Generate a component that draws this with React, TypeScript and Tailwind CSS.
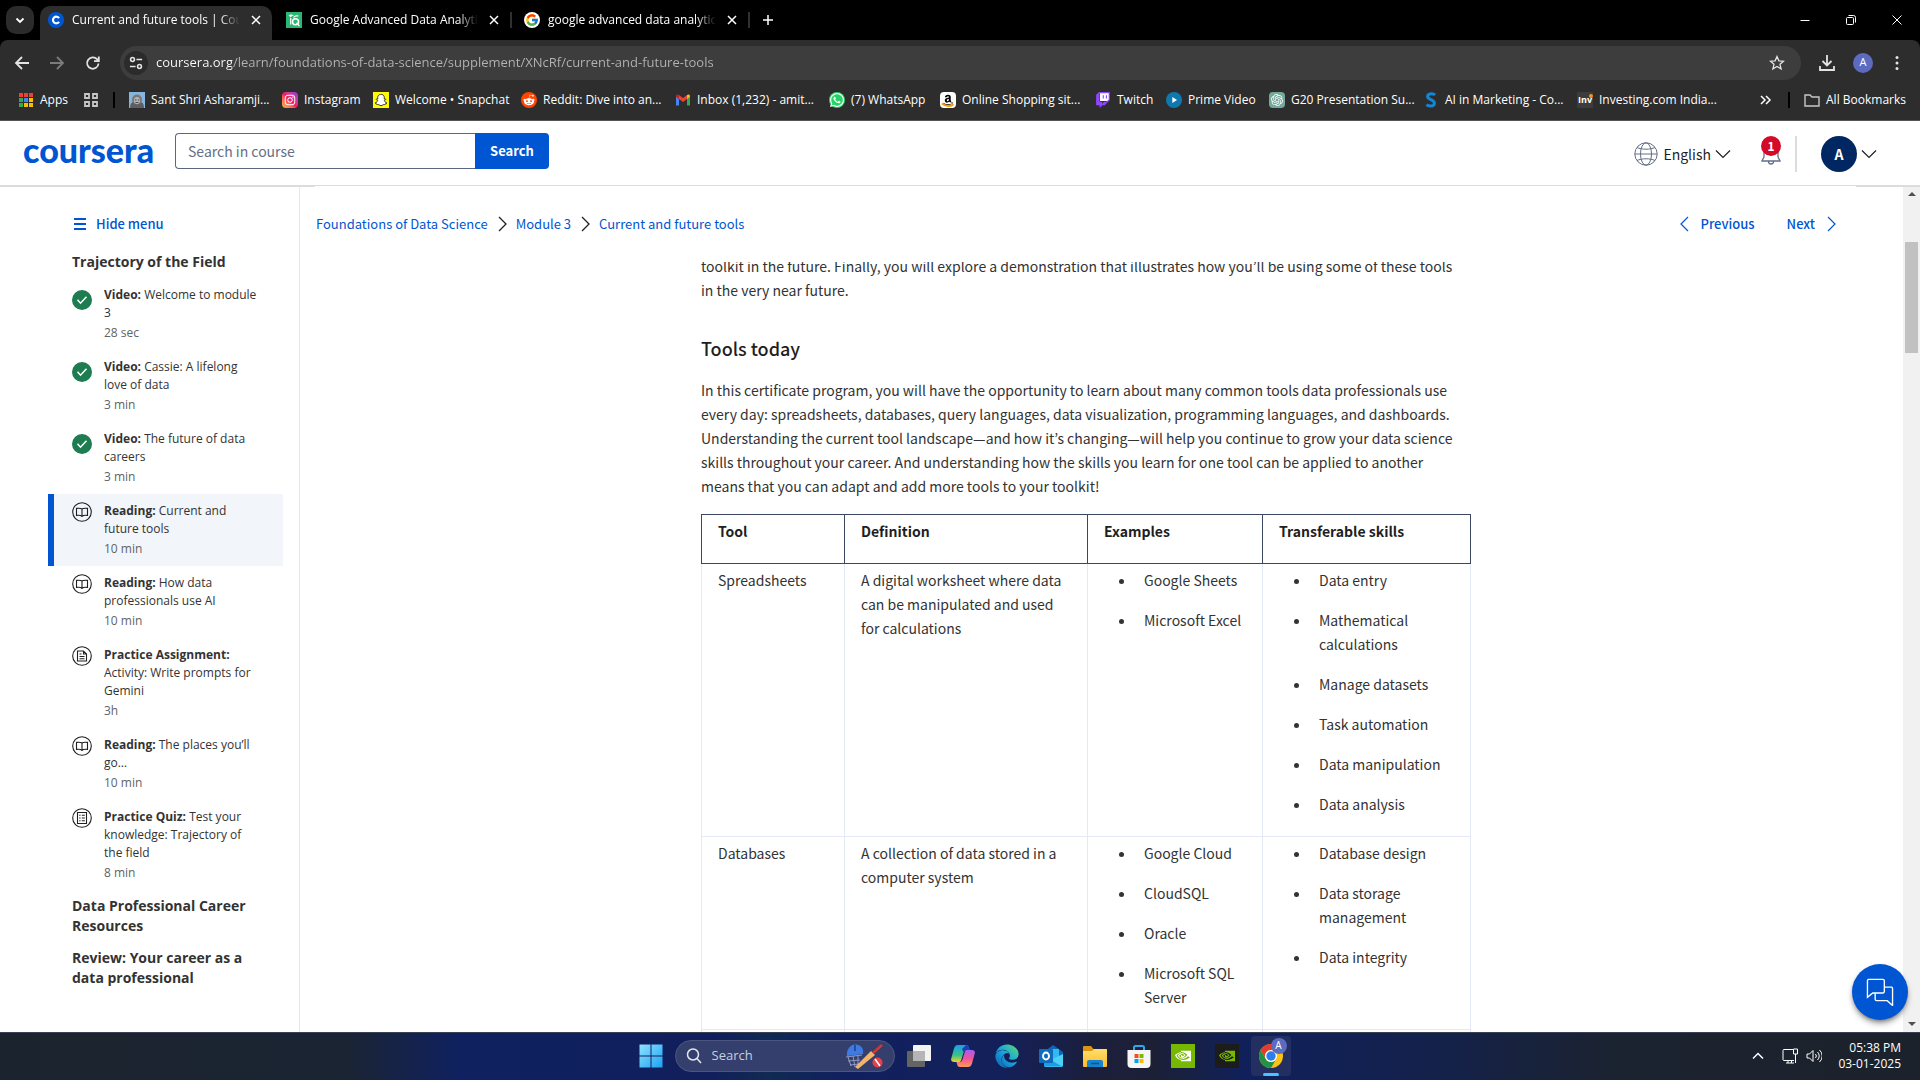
import React from "react";
import {
  FaAmazon,
  FaEdge,
  FaInstagram,
  FaRedditAlien,
  FaSnapchatGhost,
  FaWhatsapp,
} from "react-icons/fa";
import { FcGoogle } from "react-icons/fc";
import { SiNvidia, SiOpenai, SiTwitch } from "react-icons/si";

/* ---------- shared glyphs ---------- */

type StrokeProps = { d: string; className?: string; box?: number; width?: number };

function Stroke({ d, className = "size-4", box = 16, width = 1 }: StrokeProps) {
  return (
    <svg
      viewBox={`0 0 ${box} ${box}`}
      className={`shrink-0 ${className}`}
      fill="none"
      stroke="currentColor"
      strokeWidth={width}
      aria-hidden="true"
    >
      <path d={d} />
    </svg>
  );
}

const CROSS = "M4 4l8 8M12 4l-8 8";
const CHEVRON_RIGHT = "M5 1l7 7l-7 7";
const CHEVRON_LEFT = "M11 1l-7 7l7 7";
const CHEVRON_DOWN = "M1 4.5l7 7l7-7";

/* ---------- browser tabs ---------- */

function CourseraFavicon() {
  return (
    <svg viewBox="0 0 16 16" className="size-4 shrink-0" aria-hidden="true">
      <circle cx="8" cy="8" r="8" fill="#0056d2" />
      <path d="M11 6.1A3.3 3.3 0 1 0 11 9.9" fill="none" stroke="#fff" strokeWidth="2.2" />
    </svg>
  );
}

function LeafFavicon() {
  return (
    <svg viewBox="0 0 16 16" className="size-4 shrink-0" aria-hidden="true">
      <rect width="16" height="16" fill="#2bb673" />
      <path d="M2.500 3c2-1 4-.8 5.500 1c-2-.3-3 .5-3.500 1.500z" fill="#fff" />
      <circle cx="9.500" cy="9.800" r="3" fill="none" stroke="#fff" strokeWidth="1.500" />
      <path d="M4.700 6v6.500M10.500 11l3 3M7.500 5.500c1-1.500 3-2 5-1.500" fill="none" stroke="#fff" strokeWidth="1.200" />
    </svg>
  );
}

function Tab({ icon, title, active = false }: { icon: React.ReactNode; title: string; active?: boolean }) {
  return (
    <div
      className={
        active
          ? "flex h-[34px] w-[232px] items-center gap-2 self-end rounded-t-[10px] bg-[#2d2d2d] px-2 pb-1.5"
          : "flex h-7 w-[238px] items-center gap-2 pr-1 pl-2"
      }
    >
      {icon}
      <span className="min-w-0 flex-1 overflow-hidden text-xs whitespace-nowrap text-white [mask-image:linear-gradient(90deg,#000_88%,transparent)]">
        {title}
      </span>
      <button type="button" aria-label={`Close ${title}`} className="text-white">
        <Stroke d={CROSS} width={1.5} />
      </button>
      {!active && <span className="h-4 w-0.5 bg-[#303030]" />}
    </div>
  );
}

function TabStrip() {
  return (
    <div className="flex h-10 items-center bg-black pl-1.5">
      <button
        type="button"
        aria-label="Search tabs"
        className="mr-1.5 flex size-7 items-center justify-center rounded-[10px] bg-[#2b2b2b] text-white"
      >
        <Stroke d="M4.500 6.500l3.500 3.500l3.500-3.500" width={1.8} />
      </button>
      <Tab active icon={<CourseraFavicon />} title="Current and future tools | Coursera" />
      <div className="pl-1.5">
        <Tab icon={<LeafFavicon />} title="Google Advanced Data Analytics" />
      </div>
      <Tab
        icon={
          <span className="flex size-4 items-center justify-center rounded-full bg-white">
            <FcGoogle className="size-3.5" />
          </span>
        }
        title="google advanced data analytics cert"
      />
      <button type="button" aria-label="New tab" className="ml-1.5 text-white">
        <Stroke d="M8 3v10M3 8h10" width={1.5} />
      </button>
      <div className="ml-auto flex text-white">
        <button type="button" aria-label="Minimise" className="flex w-[46px] justify-center">
          <Stroke d="M3.500 8.500h9" />
        </button>
        <button type="button" aria-label="Restore" className="flex w-[46px] justify-center">
          <svg viewBox="0 0 16 16" className="size-4" fill="none" stroke="currentColor" aria-hidden="true">
            <rect x="3.500" y="5.500" width="7" height="7" rx="1" />
            <path d="M5.500 3.500h5a2 2 0 0 1 2 2v5" />
          </svg>
        </button>
        <button type="button" aria-label="Close window" className="flex w-[46px] justify-center">
          <Stroke d="M3.500 3.500l9 9M12.500 3.500l-9 9" />
        </button>
      </div>
    </div>
  );
}

/* ---------- toolbar ---------- */

function Toolbar() {
  return (
    <div className="flex h-[45px] items-center rounded-t-lg bg-[#2d2d2d] pl-3.5 text-[#e3e3e3]">
      <button type="button" aria-label="Back" className="w-[35px]">
        <Stroke d="M15 8H2.500M8 2L2 8l6 6" width={1.8} />
      </button>
      <button type="button" aria-label="Forward" className="w-9 text-[#7b7b7b]">
        <Stroke d="M1 8h12.500M8 2l6 6l-6 6" width={1.8} />
      </button>
      <button type="button" aria-label="Reload" className="w-[35px]">
        <Stroke d="M13.500 8.500A5.700 5.700 0 1 1 12 4.200l1.500 1.800M13.800 1.500v4.700H9" width={1.800} />
      </button>
      <div className="flex h-[34px] min-w-0 flex-1 items-center rounded-full bg-[#3d3d3d] pr-4 pl-1">
        <button
          type="button"
          aria-label="View site information"
          className="mr-2 flex size-6 shrink-0 items-center justify-center rounded-full bg-[#2b2b2b]"
        >
          <svg viewBox="0 0 16 16" className="size-3.5" fill="none" stroke="currentColor" strokeWidth="1.800" aria-hidden="true">
            <circle cx="4" cy="4" r="2.200" />
            <circle cx="12" cy="12" r="2.200" />
            <path d="M8.500 4H15M1 12h6.500" />
          </svg>
        </button>
        <input
          aria-label="Address"
          readOnly
          value="coursera.org/learn/foundations-of-data-science/supplement/XNcRf/current-and-future-tools"
          className="min-w-0 flex-1 bg-[linear-gradient(90deg,#ffffff_76px,#b4b4b4_76px)] bg-clip-text text-[13px] text-transparent outline-none"
        />
        <button type="button" aria-label="Bookmark this page">
          <Stroke
            d="M8 1.500l1.900 4.300l4.600.4l-3.500 3.100l1.100 4.600L8 11.400l-4.100 2.500L5 9.300L1.500 6.200l4.600-.4z"
            width={1.300}
          />
        </button>
      </div>
      <button type="button" aria-label="Downloads" className="ml-[18px]">
        <Stroke d="M8 0v10M3.500 6L8 10.500L12.500 6M1 11v4h14v-4" width={1.800} />
      </button>
      <button
        type="button"
        aria-label="Profile"
        className="ml-[18px] flex size-5 items-center justify-center rounded-full bg-[#5c6bc0] text-[11px] text-white"
      >
        A
      </button>
      <button type="button" aria-label="Browser menu" className="mr-[15px] ml-4">
        <svg viewBox="0 0 16 16" className="size-4" fill="currentColor" aria-hidden="true">
          <circle cx="8" cy="2.500" r="1.500" />
          <circle cx="8" cy="8" r="1.500" />
          <circle cx="8" cy="13.500" r="1.500" />
        </svg>
      </button>
    </div>
  );
}

/* ---------- bookmarks ---------- */

function AppsIcon() {
  const colours = ["#ea4335", "#ea4335", "#ea4335", "#34a853", "#4285f4", "#fbbc04", "#34a853", "#fbbc04", "#fbbc04"];
  return (
    <svg viewBox="0 0 16 16" className="size-4 shrink-0" aria-hidden="true">
      {colours.map((c, i) => (
        <rect key={i} x={1 + (i % 3) * 5} y={1 + Math.floor(i / 3) * 5} width="4" height="4" fill={c} />
      ))}
    </svg>
  );
}

function GmailIcon() {
  return (
    <svg viewBox="0 0 16 16" className="size-4 shrink-0" aria-hidden="true">
      <path d="M1 13.500V4l3 2.200v7.300z" fill="#4285f4" />
      <path d="M15 13.500V4l-3 2.200v7.300z" fill="#34a853" />
      <path d="M1 4.200c0-2 1.800-2.200 3-1.300v4L1 4.800z" fill="#c5221f" />
      <path d="M15 4.200c0-2-1.800-2.200-3-1.300v4l3-2.100z" fill="#fbbc04" />
      <path d="M4 2.900l4 3l4-3v4l-4 3l-4-3z" fill="#ea4335" />
    </svg>
  );
}

function PortraitIcon() {
  return (
    <svg viewBox="0 0 16 16" className="size-4 shrink-0" aria-hidden="true">
      <rect width="16" height="16" fill="#86b6dc" />
      <path d="M1 16c0-5 2.500-7 7-7s7 2 7 7z" fill="#5d5f63" />
      <circle cx="8" cy="7.500" r="5" fill="#77797c" />
      <ellipse cx="8" cy="8.500" rx="3" ry="3.500" fill="#b9b6b2" />
      <path d="M6 8h1.500M8.800 8h1.500M6.500 10.500h3" stroke="#45474a" />
    </svg>
  );
}

const ICON_TILE = "flex size-4 shrink-0 items-center justify-center";

const BOOKMARKS: { label: string; width: string; icon: React.ReactNode }[] = [
  { label: "Sant Shri Asharamji...", width: "w-[153px]", icon: <PortraitIcon /> },
  {
    label: "Instagram",
    width: "w-[91px]",
    icon: (
      <span className={`${ICON_TILE} rounded bg-linear-to-tr from-[#fdb730] via-[#f3125f] to-[#8f2be8]`}>
        <FaInstagram className="size-3 text-white" />
      </span>
    ),
  },
  {
    label: "Welcome • Snapchat",
    width: "w-[148px]",
    icon: (
      <span className={`${ICON_TILE} bg-[#fffc00]`}>
        <FaSnapchatGhost className="size-3 text-white" stroke="#222" strokeWidth={40} />
      </span>
    ),
  },
  {
    label: "Reddit: Dive into an...",
    width: "w-[154px]",
    icon: (
      <span className={`${ICON_TILE} rounded-full bg-[#ff4500]`}>
        <FaRedditAlien className="size-3 text-white" />
      </span>
    ),
  },
  { label: "Inbox (1,232) - amit...", width: "w-[154px]", icon: <GmailIcon /> },
  {
    label: "(7) WhatsApp",
    width: "w-[111px]",
    icon: (
      <span className={`${ICON_TILE} rounded-full bg-[#25d366]`}>
        <FaWhatsapp className="size-4 text-white" />
      </span>
    ),
  },
  {
    label: "Online Shopping sit...",
    width: "w-[155px]",
    icon: (
      <span className={`${ICON_TILE} relative rounded-sm bg-white`}>
        <FaAmazon className="size-3 text-black" />
        <svg viewBox="0 0 16 16" className="absolute inset-0 size-4" aria-hidden="true">
          <path d="M2 11.500c3.500 3 8 3 11.500.8" fill="none" stroke="#ff9900" strokeWidth="2" />
        </svg>
      </span>
    ),
  },
  {
    label: "Twitch",
    width: "w-[71px]",
    icon: (
      <SiTwitch className="size-4 shrink-0 bg-[linear-gradient(#fff,#fff)] bg-[length:9px_8px] bg-[position:5px_1px] bg-no-repeat text-[#9146ff]" />
    ),
  },
  {
    label: "Prime Video",
    width: "w-[103px]",
    icon: (
      <svg viewBox="0 0 16 16" className="size-4 shrink-0" aria-hidden="true">
        <circle cx="8" cy="8" r="8" fill="#0f79af" />
        <path d="M6.300 5l4.700 3l-4.700 3z" fill="#fff" />
      </svg>
    ),
  },
  {
    label: "G20 Presentation Su...",
    width: "w-[154px]",
    icon: (
      <span className={`${ICON_TILE} rounded-sm bg-[#74aa9c]`}>
        <SiOpenai className="size-3 text-white" />
      </span>
    ),
  },
  {
    label: "AI in Marketing - Co...",
    width: "w-[154px]",
    icon: (
      <svg viewBox="0 0 16 16" className="size-4 shrink-0" aria-hidden="true">
        <path
          d="M12 3C10.500 1.300 5 1 4.600 4.400C4.300 7.800 11.800 7.600 11.400 11.300C11 14.800 5.500 14.500 3.500 12.600"
          fill="none"
          stroke="#1287d8"
          strokeWidth="3"
        />
      </svg>
    ),
  },
  {
    label: "Investing.com India...",
    width: "w-[154px]",
    icon: (
      <span className={`${ICON_TILE} relative bg-[#3c3c3c] text-[9px] leading-4 font-bold text-white`}>
        Inv
        <i className="absolute top-0.5 right-0 size-1 rounded-full bg-[#f7931e]" />
      </span>
    ),
  },
];

function BookmarksBar() {
  return (
    <div className="flex h-9 items-center border-b border-[#555] bg-[#2d2d2d] pb-1.5 pl-[18px] text-xs whitespace-nowrap text-white">
      <a href="#apps" className="flex items-center gap-1.5">
        <AppsIcon />
        Apps
      </a>
      <button type="button" aria-label="Tab groups" className="ml-[15px] text-[#c7c7c7]">
        <Stroke d="M2 2h4v4h-4zM10 2h4v4h-4zM2 10h4v4h-4zM10 10h4v4h-4z" width={1.800} />
      </button>
      <span className="mx-3.5 h-4 w-0.5 bg-black" />
      <nav aria-label="Bookmarks" className="flex min-w-0 flex-1 overflow-hidden">
        {BOOKMARKS.map((b) => (
          <a key={b.label} href="#bookmark" className={`flex shrink-0 items-center gap-1.5 ${b.width}`}>
            {b.icon}
            {b.label}
          </a>
        ))}
      </nav>
      <button type="button" aria-label="More bookmarks" className="mr-3.5">
        <Stroke d="M3 4l4 4l-4 4M8 4l4 4l-4 4" width={1.500} />
      </button>
      <span className="mr-3.5 h-4 w-0.5 bg-black" />
      <a href="#all-bookmarks" className="mr-3.5 flex items-center gap-1.5">
        <Stroke d="M1 3h5l2 2h7v9H1z" width={1.400} className="size-4 text-[#c7c7c7]" />
        All Bookmarks
      </a>
    </div>
  );
}

/* ---------- course header ---------- */

function SiteHeader() {
  return (
    <header className="flex h-[65px] shrink-0 items-center border-b border-[#dcdcdc] bg-white pl-[23px] text-[#1f1f1f]">
      <a
        href="#home"
        className="mb-1.5 w-[152px] font-['Lato'] text-[34px] leading-9 font-black text-[#0056d2]"
      >
        coursera
      </a>
      <form role="search" className="mb-1 flex h-9" onSubmit={(e) => e.preventDefault()}>
        <input
          type="text"
          aria-label="Search in course"
          placeholder="Search in course"
          className="w-[300px] rounded-l border border-r-0 border-[#5b6780] px-3 text-sm outline-none placeholder:text-[#636f86]"
        />
        <button type="submit" className="w-[74px] rounded-r bg-[#0056d2] text-[13px] font-bold text-white">
          Search
        </button>
      </form>
      <div className="mt-0.5 mr-[43px] ml-auto flex items-center">
        <button type="button" className="flex items-center text-sm">
          <svg viewBox="0 0 24 24" className="mr-[5px] size-6" fill="none" stroke="#636f86" aria-hidden="true">
            <circle cx="12" cy="12" r="11.200" />
            <ellipse cx="12" cy="12" rx="5.500" ry="11.200" />
            <path d="M.8 12h22.400M3 5.500c5 2.300 13 2.300 18 0M3 18.500c5-2.300 13-2.300 18 0" />
          </svg>
          English
          <Stroke d={CHEVRON_DOWN} className="ml-1 size-4" width={1.200} />
        </button>
        <button type="button" aria-label="1 notification" className="relative ml-7 flex h-9 w-6 items-center justify-center">
          <svg viewBox="0 0 24 24" className="size-6" fill="none" stroke="#636f86" strokeWidth="1.300" aria-hidden="true">
            <path d="M5 11a7 7 0 0 1 14 0v3.500c0 2 1.500 2.500 2 4.500H3c.5-2 2-2.500 2-4.500zM9.500 19.500a2.500 2.500 0 0 0 5 0" />
          </svg>
          <span className="absolute top-0 left-0.5 flex size-5 items-center justify-center rounded-full bg-[#d30b28] text-xs font-bold text-white">
            1
          </span>
        </button>
        <span className="ml-3 h-9 w-0.5 bg-[#dcdcdc]" />
        <button type="button" aria-label="Account" className="ml-6 flex items-center">
          <span className="flex size-9 items-center justify-center rounded-full bg-[#002761] text-sm font-bold text-white">
            A
          </span>
          <Stroke d={CHEVRON_DOWN} className="ml-1 size-4" width={1.200} />
        </button>
      </div>
    </header>
  );
}

/* ---------- sidebar ---------- */

type Kind = "done" | "reading" | "assignment" | "quiz";

const ITEMS: { kind: Kind; type: string; title: string; time: string; active?: boolean }[] = [
  { kind: "done", type: "Video:", title: "Welcome to module 3", time: "28 sec" },
  { kind: "done", type: "Video:", title: "Cassie: A lifelong love of data", time: "3 min" },
  { kind: "done", type: "Video:", title: "The future of data careers", time: "3 min" },
  { kind: "reading", type: "Reading:", title: "Current and future tools", time: "10 min", active: true },
  { kind: "reading", type: "Reading:", title: "How data professionals use AI", time: "10 min" },
  { kind: "assignment", type: "Practice Assignment:", title: "Activity: Write prompts for Gemini", time: "3h" },
  { kind: "reading", type: "Reading:", title: "The places you’ll go…", time: "10 min" },
  { kind: "quiz", type: "Practice Quiz:", title: "Test your knowledge: Trajectory of the field", time: "8 min" },
];

const ITEM_PATHS: Record<Exclude<Kind, "done">, string> = {
  reading: "M10 7C9 6.200 7 6.200 4.500 6.400v7c2.500-.2 4.500 0 5.500.8c1-.8 3-1 5.500-.8v-7C13 6.200 11 6.200 10 7zv8",
  assignment: "M5.500 5h6l3 3v7h-9zM11.500 5v3h3M7.500 8h2M7.500 10.500h5M7.500 12.700h5",
  quiz: "M5.500 4.500h9v11h-9zM7.200 7.300h1.300M9.800 7.300h3M7.200 10h1.300M9.800 10h3M7.200 12.700h1.300M9.800 12.700h3",
};

function ItemIcon({ kind }: { kind: Kind }) {
  if (kind === "done") {
    return (
      <svg viewBox="0 0 20 20" className="mt-1 size-5 shrink-0" aria-hidden="true">
        <circle cx="10" cy="10" r="10" fill="#1d7c50" />
        <path d="M5.500 9.700l3 3.500l6-6.500" fill="none" stroke="#fff" strokeWidth="1.500" />
      </svg>
    );
  }
  return (
    <svg viewBox="0 0 20 20" className="size-5 shrink-0" fill="none" stroke="#1f1f1f" strokeWidth="1.100" aria-hidden="true">
      <circle cx="10" cy="10" r="9.300" />
      <path d={ITEM_PATHS[kind]} />
    </svg>
  );
}

function SectionTitle({ children }: { children: React.ReactNode }) {
  return <h2 className="py-1.5 pr-9 pl-[72px] text-sm leading-5 font-bold text-[#333]">{children}</h2>;
}

function Sidebar() {
  return (
    <aside className="w-[300px] shrink-0 border-r border-[#e5e8f0] font-['Open_Sans',sans-serif]">
      <button
        type="button"
        className="mt-[25px] mb-[9px] ml-[74px] flex h-[26px] items-center gap-2.5 font-['Noto_Sans_CJK_KR',sans-serif] text-[13px] font-medium text-[#0056d2]"
      >
        <Stroke d="M0 1h12M0 6h12M0 11h12" box={12} width={2} className="size-3" />
        Hide menu
      </button>
      <SectionTitle>Trajectory of the Field</SectionTitle>
      <ul>
        {ITEMS.map((item) => (
          <li key={item.title} className="mr-4 ml-12">
            <a
              href="#item"
              className={
                item.active
                  ? "flex gap-3 border-l-6 border-[#0056d2] bg-[#f2f5fa] py-2 pr-6 pl-[18px]"
                  : "flex gap-3 border-l-6 border-transparent py-2 pr-6 pl-[18px]"
              }
            >
              <ItemIcon kind={item.kind} />
              <span className="flex flex-col gap-0.5 text-xs leading-[18px] text-[#333]">
                <span>
                  <strong className="font-bold">{item.type}</strong> {item.title}
                </span>
                <span className="text-[#636363]">{item.time}</span>
              </span>
            </a>
          </li>
        ))}
      </ul>
      <SectionTitle>Data Professional Career Resources</SectionTitle>
      <SectionTitle>Review: Your career as a data professional</SectionTitle>
    </aside>
  );
}

/* ---------- reading ---------- */

const ROWS = [
  {
    tool: "Spreadsheets",
    definition: "A digital worksheet where data can be manipulated and used for calculations",
    examples: ["Google Sheets", "Microsoft Excel"],
    skills: [
      "Data entry",
      "Mathematical calculations",
      "Manage datasets",
      "Task automation",
      "Data manipulation",
      "Data analysis",
    ],
  },
  {
    tool: "Databases",
    definition: "A collection of data stored in a computer system",
    examples: ["Google Cloud", "CloudSQL", "Oracle", "Microsoft SQL Server"],
    skills: ["Database design", "Data storage management", "Data integrity"],
  },
];

function Bullets({ items }: { items: string[] }) {
  return (
    <ul className="list-disc pl-8">
      {items.map((item) => (
        <li key={item} className="mb-4 pl-2">
          {item}
        </li>
      ))}
    </ul>
  );
}

const CELL = "border border-[#e5e8f5] px-4 py-1";
const HEAD = "border border-[#3b4761] px-4 pt-1 pb-5 text-left font-bold text-[#1f1f1f]";

function ToolTable() {
  return (
    <table className="mt-4 w-full table-fixed border-collapse">
      <colgroup>
        <col className="w-[143px]" />
        <col className="w-[243px]" />
        <col className="w-[175px]" />
        <col />
      </colgroup>
      <thead>
        <tr>
          <th className={HEAD}>Tool</th>
          <th className={HEAD}>Definition</th>
          <th className={HEAD}>Examples</th>
          <th className={HEAD}>Transferable skills</th>
        </tr>
      </thead>
      <tbody className="align-top">
        {ROWS.map((row) => (
          <tr key={row.tool}>
            <td className={CELL}>{row.tool}</td>
            <td className={CELL}>{row.definition}</td>
            <td className={CELL}>
              <Bullets items={row.examples} />
            </td>
            <td className={CELL}>
              <Bullets items={row.skills} />
            </td>
          </tr>
        ))}
        <tr className="h-12">
          <td className={CELL} />
          <td className={CELL} />
          <td className={CELL} />
          <td className={CELL} />
        </tr>
      </tbody>
    </table>
  );
}

function Reading() {
  return (
    <main className="flex min-w-0 flex-1 flex-col">
      <div className="flex h-[76px] shrink-0 items-center pr-16 pl-4 text-[13px] text-[#0056d2]">
        <nav aria-label="Breadcrumb" className="flex items-center gap-1.5">
          <a href="#course">Foundations of Data Science</a>
          <Stroke d={CHEVRON_RIGHT} className="size-4 text-[#1f1f1f]" width={1.300} />
          <a href="#module">Module 3</a>
          <Stroke d={CHEVRON_RIGHT} className="size-4 text-[#1f1f1f]" width={1.300} />
          <a href="#page">Current and future tools</a>
        </nav>
        <div className="ml-auto flex items-center gap-8 font-medium">
          <a href="#previous" className="flex items-center gap-2">
            <Stroke d={CHEVRON_LEFT} width={1.200} />
            Previous
          </a>
          <a href="#next" className="flex items-center gap-2">
            Next
            <Stroke d={CHEVRON_RIGHT} width={1.200} />
          </a>
        </div>
      </div>
      <div className="min-h-0 flex-1 overflow-hidden pr-[31px]">
        <article className="mx-auto -mt-2 w-[770px] max-w-full text-sm leading-6 text-[#333]">
          <p className="pr-4">
            toolkit in the future. Finally, you will explore a demonstration that illustrates how you’ll be using some
            of these tools in the very near future.
          </p>
          <h1 className="mt-8 mb-4 text-lg leading-7 font-medium text-[#1f1f1f]">Tools today</h1>
          <p className="pr-4">
            In this certificate program, you will have the opportunity to learn about many common tools data
            professionals use every day: spreadsheets, databases, query languages, data visualization, programming
            languages, and dashboards. Understanding the current tool landscape—and how it’s changing—will help you
            continue to grow your data science skills throughout your career. And understanding how the skills you
            learn for one tool can be applied to another means that you can adapt and add more tools to your toolkit!
          </p>
          <ToolTable />
        </article>
      </div>
    </main>
  );
}

function Scrollbar() {
  return (
    <div className="flex w-[17px] shrink-0 flex-col items-center bg-[#f1f1f1] py-1.5" aria-hidden="true">
      <svg viewBox="0 0 8 4" className="h-1 w-2" fill="#505050">
        <path d="M4 0l4 4H0z" />
      </svg>
      <div className="mt-[46px] h-[111px] w-[13px] bg-[#c1c1c1]" />
      <svg viewBox="0 0 8 4" className="mt-auto h-1 w-2" fill="#505050">
        <path d="M4 4L0 0h8z" />
      </svg>
    </div>
  );
}

/* ---------- taskbar ---------- */

function ColourDefs() {
  return (
    <svg className="absolute size-0" aria-hidden="true">
      <defs>
        <linearGradient id="edge" x1="0" y1="1" x2="1" y2="0">
          <stop offset="0" stopColor="#0b5cad" />
          <stop offset="0.500" stopColor="#1ba5dd" />
          <stop offset="1" stopColor="#5be06a" />
        </linearGradient>
        <linearGradient id="copilotA" x1="0" y1="0" x2="0" y2="1">
          <stop offset="0" stopColor="#1f9bf0" />
          <stop offset="0.600" stopColor="#36c481" />
          <stop offset="1" stopColor="#f3d02f" />
        </linearGradient>
        <linearGradient id="copilotB" x1="0" y1="0" x2="0" y2="1">
          <stop offset="0" stopColor="#a95cf0" />
          <stop offset="0.500" stopColor="#f0529a" />
          <stop offset="1" stopColor="#fb9a56" />
        </linearGradient>
        <linearGradient id="start" x1="0" y1="0" x2="1" y2="1">
          <stop offset="0" stopColor="#8fe3ff" />
          <stop offset="1" stopColor="#1ba1f3" />
        </linearGradient>
        <linearGradient id="folder" x1="0" y1="0" x2="0" y2="1">
          <stop offset="0" stopColor="#ffdf6b" />
          <stop offset="1" stopColor="#fdbb2c" />
        </linearGradient>
      </defs>
    </svg>
  );
}

const APP = "size-6 shrink-0";

function TaskView() {
  return (
    <svg viewBox="0 0 24 24" className={APP} aria-hidden="true">
      <rect x="6" y="1" width="18" height="16" rx="1" fill="#f3f3f3" />
      <rect x="0" y="7" width="18" height="16" rx="1" fill="#646464" />
      <rect x="6" y="7" width="12" height="10" fill="#b5b5b5" />
    </svg>
  );
}

function Copilot() {
  return (
    <svg viewBox="0 0 24 24" className={APP} aria-hidden="true">
      <path d="M7 1h8c2 0 2.500 1 3 3l.6 2h-3c-2 0-2.600 1-3.200 3l-2.200 7c-.5 1.500-1 2-2.500 2H3c-2.500 0-3.400-1.500-2.600-4L3 4.500C3.800 2 5 1 7 1z" fill="url(#copilotA)" />
      <path d="M15 1c2 0 2.500 1 3 3l.6 2h-3c-1.800 0-2.500.8-3 2.200L11 5z" fill="#1a3fb5" />
      <path d="M17 23H9c-2 0-2.500-1-3-3l-.6-2h3c2 0 2.600-1 3.200-3l2.200-7c.5-1.500 1-2 2.500-2H21c2.500 0 3.400 1.500 2.600 4L21 19.500c-.8 2.500-2 3.500-4 3.500z" fill="url(#copilotB)" />
    </svg>
  );
}

function Outlook() {
  return (
    <svg viewBox="0 0 24 24" className={APP} aria-hidden="true">
      <path d="M5 8l9-7l10 7v13a2 2 0 0 1-2 2H7a2 2 0 0 1-2-2z" fill="#1066b5" />
      <path d="M8 5h12v10H8z" fill="#35b8f1" />
      <path d="M24 10v11a2 2 0 0 1-2 2H7a2 2 0 0 1-2-2v-2z" fill="#4cd0f5" />
      <path d="M5 12l18 10.500H7a2 2 0 0 1-2-2z" fill="#1c9de3" />
      <rect x="0" y="5" width="14" height="14" rx="1" fill="#0f6cbd" />
      <ellipse cx="7" cy="12" rx="3" ry="3.500" fill="none" stroke="#fff" strokeWidth="1.900" />
    </svg>
  );
}

function Explorer() {
  return (
    <svg viewBox="0 0 24 24" className={APP} aria-hidden="true">
      <path d="M0 3a1 1 0 0 1 1-1h7l2.500 3H24v6H0z" fill="#d99413" />
      <path d="M0 7h9l2-2h12a1 1 0 0 1 1 1v16a1 1 0 0 1-1 1H1a1 1 0 0 1-1-1z" fill="url(#folder)" />
      <path d="M4 23v-5a2 2 0 0 1 2-2h12a2 2 0 0 1 2 2v5z" fill="#1583d0" />
      <path d="M8 19.500h8" stroke="#0a5597" strokeWidth="1.500" />
    </svg>
  );
}

function Store() {
  return (
    <svg viewBox="0 0 24 24" className={APP} aria-hidden="true">
      <path d="M7 7V3.500a1.500 1.500 0 0 1 1.500-1.500h7A1.500 1.500 0 0 1 17 3.500V7" fill="none" stroke="#2aa9ee" strokeWidth="2" />
      <path d="M.5 6h23v14a4 4 0 0 1-4 4h-15a4 4 0 0 1-4-4z" fill="#f5f5f5" />
      <path d="M7.500 10h4v4h-4z" fill="#f25022" />
      <path d="M12.500 10h4v4h-4z" fill="#7fba00" />
      <path d="M7.500 15h4v4h-4z" fill="#00a4ef" />
      <path d="M12.500 15h4v4h-4z" fill="#ffb900" />
    </svg>
  );
}

function Chrome() {
  return (
    <svg viewBox="0 0 24 24" className={APP} aria-hidden="true">
      <circle cx="12" cy="12" r="12" fill="#fbc116" />
      <path d="M1.600 6A12 12 0 0 1 22.400 6H12a6 6 0 0 0-5.200 9z" fill="#e33b2e" />
      <path d="M1.600 6l5.200 9A6 6 0 0 0 17.200 15L12 24A12 12 0 0 1 1.600 6z" fill="#229342" />
      <circle cx="12" cy="12" r="6" fill="#fff" />
      <circle cx="12" cy="12" r="4.700" fill="#2f7cf0" />
    </svg>
  );
}

function CricketArt() {
  return (
    <svg viewBox="0 0 40 28" className="h-7 w-10 shrink-0" aria-hidden="true">
      <path d="M3 14C2 7 7 2 12 2.500c5 .5 8 4 7 9.500z" fill="#3f7ae0" />
      <path d="M11 3v6" stroke="#1e3f94" strokeWidth="1.500" />
      <path d="M2 15l16-2M4 19l12-1M6 23l9-1M4 15l3 9M9 14l2 11M14 14v9" stroke="#8e9ac0" fill="none" />
      <path d="M11 25l3 2l17-14l-4-4z" fill="#f0b46c" />
      <path d="M29 11l9-8" stroke="#d9352f" strokeWidth="2.500" />
      <circle cx="33.500" cy="20.500" r="5" fill="#e8404a" />
      <path d="M31 17l5 7" stroke="#fff" strokeWidth="1.500" />
    </svg>
  );
}

function Taskbar() {
  return (
    <footer className="flex h-12 shrink-0 items-center bg-[linear-gradient(90deg,#1b242e_0%,#1b2433_18%,#0f2160_24%,#111f5c_37%,#102a52_40%,#10205f_44%,#14205a_52%,#1b1f3c_57%,#1c2036_60%,#10205c_65%,#14214a_75%,#1b2330_84%,#1c222b_100%)] font-['Open_Sans',sans-serif] text-xs text-white shadow-[inset_0_1px_0_#3a4154]">
      <div className="flex-1" />
      <div className="flex items-center gap-5 pl-7">
        <button type="button" aria-label="Start" className="-mr-2">
          <svg viewBox="0 0 24 24" className={APP} fill="url(#start)" aria-hidden="true">
            <path d="M.5.500h11v11h-11zM12.500.500h11v11h-11zM.5 12.500h11v11h-11zM12.500 12.500h11v11h-11z" />
          </svg>
        </button>
        <label className="-mr-2 flex h-8 w-[220px] items-center gap-2.5 rounded-full border border-[#4c557f] bg-[#343f6d] px-2.5">
          <svg viewBox="0 0 16 16" className="size-4 shrink-0" fill="none" stroke="#e6e8f0" strokeWidth="1.500" aria-hidden="true">
            <circle cx="7" cy="6.500" r="5.500" />
            <path d="M11 10.500l4 4.500" />
          </svg>
          <input
            type="text"
            aria-label="Search Windows"
            placeholder="Search"
            className="min-w-0 flex-1 bg-transparent text-[13px] outline-none placeholder:text-[#c9cddd]"
          />
          <CricketArt />
        </label>
        <button type="button" aria-label="Task view">
          <TaskView />
        </button>
        <button type="button" aria-label="Copilot">
          <Copilot />
        </button>
        <button type="button" aria-label="Edge">
          <FaEdge className={APP} fill="url(#edge)" />
        </button>
        <button type="button" aria-label="Outlook">
          <Outlook />
        </button>
        <button type="button" aria-label="File Explorer">
          <Explorer />
        </button>
        <button type="button" aria-label="Store">
          <Store />
        </button>
        <button type="button" aria-label="NVIDIA Control Panel" className="flex size-6 items-center justify-center bg-[#76b900]">
          <SiNvidia className="size-4 text-white" />
        </button>
        <button type="button" aria-label="GeForce Experience" className="flex size-6 items-center justify-center bg-[#1c1c1c]">
          <SiNvidia className="size-4 text-[#76b900]" />
        </button>
        <button
          type="button"
          aria-label="Chrome"
          className="relative -ml-2 flex size-10 items-center justify-center rounded bg-[#232f60]"
        >
          <Chrome />
          <span className="absolute top-0.5 right-1 flex size-4 items-center justify-center rounded-full bg-[#5c6bc0] text-[10px]">
            A
          </span>
          <span className="absolute bottom-0 h-[3px] w-4 rounded-full bg-[#4cc2ff]" />
        </button>
      </div>
      <div className="flex flex-1 items-center justify-end pr-[19px]">
        <button type="button" aria-label="Show hidden icons" className="mr-4">
          <Stroke d="M3 10.500l5-5l5 5" width={1.500} />
        </button>
        <button type="button" aria-label="Network" className="mr-2">
          <Stroke d="M11 1.500H2a1 1 0 0 0-1 1v9a1 1 0 0 0 1 1h10M6 12.500v2.500M9.500 12.500v2.500M4 15h8M11.500 1h4v5h-4zM13.500 6v9" />
        </button>
        <button type="button" aria-label="Volume" className="mr-4">
          <Stroke d="M1 6v4h2.500l3.500 3.500v-11L3.500 6zM9.500 6a3 3 0 0 1 0 4M11.500 4a5.500 5.500 0 0 1 0 8M13.500 2a8 8 0 0 1 0 12" />
        </button>
        <time dateTime="2025-01-03T17:38" className="text-right leading-4">
          05:38 PM
          <br />
          03-01-2025
        </time>
      </div>
    </footer>
  );
}

export default function App() {
  return (
    <div className="flex h-screen flex-col overflow-hidden bg-white font-['Noto_Sans_CJK_KR',sans-serif]">
      <ColourDefs />
      <div className="shrink-0 bg-black font-['Open_Sans',sans-serif]">
        <TabStrip />
        <Toolbar />
        <BookmarksBar />
      </div>
      <SiteHeader />
      <div className="relative flex min-h-0 flex-1">
        <span className="absolute top-0 left-0 h-px w-[315px] bg-[#dcdcdc]" />
        <span className="absolute top-0 right-0 h-px w-16 bg-[#dcdcdc]" />
        <div className="flex min-w-0 flex-1 overflow-hidden">
          <Sidebar />
          <Reading />
        </div>
        <Scrollbar />
        <button
          type="button"
          aria-label="Open chat"
          className="absolute right-3 bottom-3 flex size-14 items-center justify-center rounded-full bg-[#0056d2] text-white shadow-md shadow-black/40"
        >
          <Stroke
            d="M2.500 1.500h15a1.500 1.500 0 0 1 1.500 1.500v11a1.500 1.500 0 0 1-1.500 1.500H7L1.500 20V3a1.500 1.500 0 0 1 1-1.500zM19.500 9.500h7a1.500 1.500 0 0 1 1 1.500v17.500L22 23.500H11a1.500 1.500 0 0 1-1.500-1.500v-6"
            box={29}
            width={1.400}
            className="size-7"
          />
        </button>
      </div>
      <Taskbar />
    </div>
  );
}
